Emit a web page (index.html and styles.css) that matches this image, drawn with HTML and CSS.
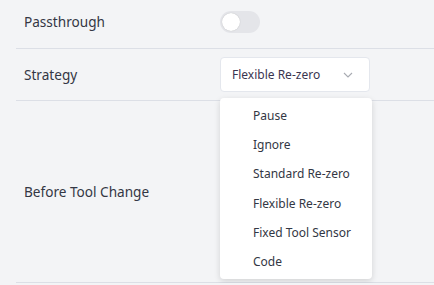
FILE: index.html
```html
<!DOCTYPE html>
<html lang="en">
<head>
  <meta charset="UTF-8" />
  <title>Tool Change Settings</title>
  <link rel="stylesheet" href="styles.css">
</head>
<body>
  <div class="settings">
    <div class="row row-short">
      <div class="label">Passthrough</div>
      <div class="control">
        <span class="switch"><span class="knob"></span></span>
      </div>
    </div>

    <div class="row">
      <div class="label">Strategy</div>
      <div class="control">
        <div class="select">
          <span>Flexible Re-zero</span>
          <svg class="chevron" width="10" height="6" viewBox="0 0 10 6">
            <path d="M1 1 L5 5 L9 1" fill="none" stroke="#a8abb2" stroke-width="1.1"/>
          </svg>
        </div>
        <ul class="menu">
          <li>Pause</li>
          <li>Ignore</li>
          <li>Standard Re-zero</li>
          <li>Flexible Re-zero</li>
          <li>Fixed Tool Sensor</li>
          <li>Code</li>
        </ul>
      </div>
    </div>

    <div class="row row-tall">
      <div class="label">Before Tool Change</div>
    </div>
  </div>
</body>
</html>
```

FILE: styles.css
```css
body {
  margin: 0;
  background: #f3f4f6;
  font-family: "Noto Sans", sans-serif;
  color: #333744;
  overflow: hidden;
}

.settings {
  padding-left: 16px;
}

.row {
  display: flex;
  align-items: center;
  height: 51px;
  border-bottom: 1px solid #dcdfe6;
}

/* top of the first row is scrolled out of view */
.row-short {
  height: 43px;
  padding-bottom: 5px;
}

.row-tall {
  height: 181px;
}

.label {
  width: 204px;
  padding-left: 8px;
  box-sizing: border-box;
  font-size: 13.6px;
}

.control {
  position: relative;
}

.switch {
  display: block;
  width: 40px;
  height: 22px;
  border-radius: 11px;
  background: #e4e5e9;
  position: relative;
}

.knob {
  position: absolute;
  left: 2px;
  top: 2px;
  width: 18px;
  height: 18px;
  border-radius: 50%;
  background: #fff;
  box-shadow: 0 0 1px rgba(0,0,0,0.25);
}

.select {
  display: flex;
  align-items: center;
  justify-content: space-between;
  width: 150px;
  height: 35px;
  box-sizing: border-box;
  padding: 0 16px 0 11px;
  background: #fff;
  border: 1px solid #e4e7ed;
  border-radius: 4px;
  font-size: 12px;
  color: #3a3550;
}

.menu {
  position: absolute;
  left: 0;
  top: 41px;
  width: 152px;
  margin: 0;
  padding: 3px 0;
  list-style: none;
  background: #fff;
  border-radius: 4px;
  box-shadow: 0 2px 6px rgba(0,0,0,0.14);
  z-index: 2;
}

.menu li {
  height: 29.2px;
  line-height: 29px;
  padding-left: 33px;
  font-size: 12px;
  color: #333744;
}
```
